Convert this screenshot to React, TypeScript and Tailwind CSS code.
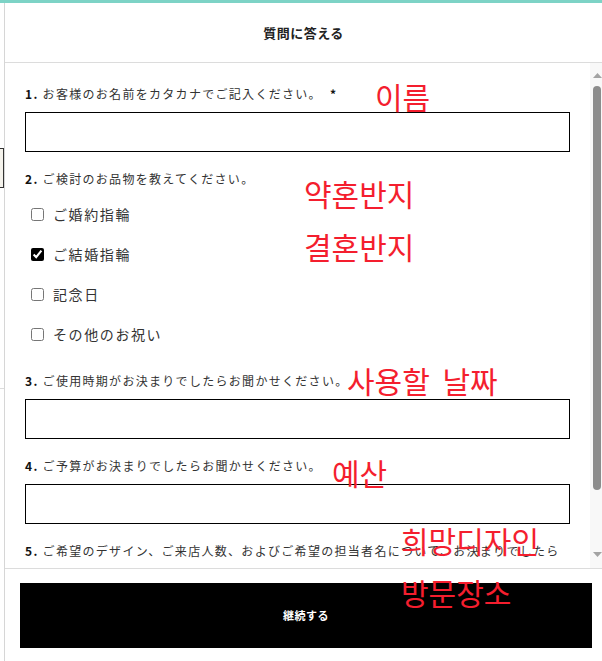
import { useState } from 'react';

const jp = { fontFamily: '"Noto Sans CJK JP", "Noto Sans", sans-serif' };
const kr = { fontFamily: '"Noto Sans CJK KR", "Noto Sans", sans-serif' };

function Label({ num, text, required }: { num: string; text: string; required?: boolean }) {
  return (
    <div className="h-[20px] flex items-center text-[12px] tracking-[1.3px] text-[#333] whitespace-nowrap" style={jp}>
      <span className="font-semibold text-[#111]">{num}.</span>
      <span className="ml-[4px]">{text}</span>
      {required && <span className="ml-[8px] font-bold text-[#111]">*</span>}
    </div>
  );
}

function TextBox() {
  return <input type="text" className="mt-[8px] block w-full h-[40px] border border-black bg-white outline-none" />;
}

const products = ['ご婚約指輪', 'ご結婚指輪', '記念日', 'その他のお祝い'];

function ScrollBar() {
  return (
    <div className="w-[12px] bg-[#f8f8f8] flex flex-col items-center">
      <svg width="9" height="5" viewBox="0 0 9 5" className="mt-[10px] ml-[2px]">
        <path d="M0 5 L4.5 0 L9 5 Z" fill="#a3a3a3" />
      </svg>
      <div className="mt-[8px] ml-[2px] w-[8px] h-[404px] rounded-full bg-[#8c8c8c]" />
      <div className="flex-1" />
      <svg width="9" height="5" viewBox="0 0 9 5" className="mb-[11px] ml-[2px]">
        <path d="M0 0 L4.5 5 L9 0 Z" fill="#a3a3a3" />
      </svg>
    </div>
  );
}

export default function App() {
  const [checked, setChecked] = useState<string[]>(['ご結婚指輪']);

  const toggle = (p: string) =>
    setChecked((c) => (c.includes(p) ? c.filter((x) => x !== p) : [...c, p]));

  return (
    <div className="relative w-[602px] h-[661px] overflow-hidden bg-white flex flex-col">
      <div className="h-[3px] bg-[#7dd3c6]" />
      <div className="flex-1 flex min-h-0">
        {/* page behind the modal */}
        <div className="w-[4px] flex flex-col bg-white">
          <div className="h-[145px]" />
          <div className="h-[40px] border-y border-r border-[#333] bg-[#f5f3ec]" />
          <div className="h-[200px]" />
          <div className="h-px bg-[#dcdcdc]" />
        </div>

        <div className="flex-1 flex flex-col border-l border-[#d6d6d6] min-w-0">
          <div className="h-[60px] shrink-0 border-b border-[#dcdcdc] flex items-center justify-center">
            <h1 className="text-[13px] font-bold text-[#222] tracking-[0.5px]" style={jp}>
              質問に答える
            </h1>
          </div>

          <div className="h-[505px] shrink-0 flex">
            <div className="flex-1 overflow-hidden px-[20px] pt-[21px] flex flex-col gap-[17px]">
              <div>
                <Label num="1" text="お客様のお名前をカタカナでご記入ください。" required />
                <TextBox />
              </div>

              <div>
                <Label num="2" text="ご検討のお品物を教えてください。" />
                <div className="mt-[5px] flex flex-col">
                  {products.map((p) => (
                    <label key={p} className="h-[40px] flex items-center cursor-pointer">
                      <input
                        type="checkbox"
                        checked={checked.includes(p)}
                        onChange={() => toggle(p)}
                        className="m-0 ml-[6px] w-[13px] h-[13px] accent-black"
                      />
                      <span className="ml-[9px] text-[14px] tracking-[1.6px] text-[#333]" style={jp}>
                        {p}
                      </span>
                    </label>
                  ))}
                </div>
              </div>

              <div>
                <Label num="3" text="ご使用時期がお決まりでしたらお聞かせください。" />
                <TextBox />
              </div>

              <div>
                <Label num="4" text="ご予算がお決まりでしたらお聞かせください。" />
                <TextBox />
              </div>

              <div>
                <Label num="5" text="ご希望のデザイン、ご来店人数、およびご希望の担当者名について、お決まりでしたら" />
                <TextBox />
              </div>
            </div>
            <ScrollBar />
          </div>

          <div className="flex-1 border-t border-[#dcdcdc] pt-[14px] pb-[13px] pl-[15px] pr-[10px]">
            <button
              className="w-full h-[65px] bg-black text-white text-[11px] font-bold tracking-[0.5px]"
              style={jp}
            >
              継続する
            </button>
          </div>
        </div>
      </div>

      {/* red hand notes over the form */}
      <div className="pointer-events-none text-[#f41e2e] text-[30px] leading-none whitespace-nowrap" style={kr}>
        <span className="absolute left-[375px] top-[81px]">이름</span>
        <span className="absolute left-[304px] top-[178px]">약혼반지</span>
        <span className="absolute left-[304px] top-[231px]">결혼반지</span>
        <span className="absolute left-[347px] top-[365px] [word-spacing:6px]">사용할 날짜</span>
        <span className="absolute left-[332px] top-[457px]">예산</span>
        <span className="absolute left-[401px] top-[525px]">희망디자인</span>
        <span className="absolute left-[401px] top-[577px]">방문장소</span>
      </div>
    </div>
  );
}
